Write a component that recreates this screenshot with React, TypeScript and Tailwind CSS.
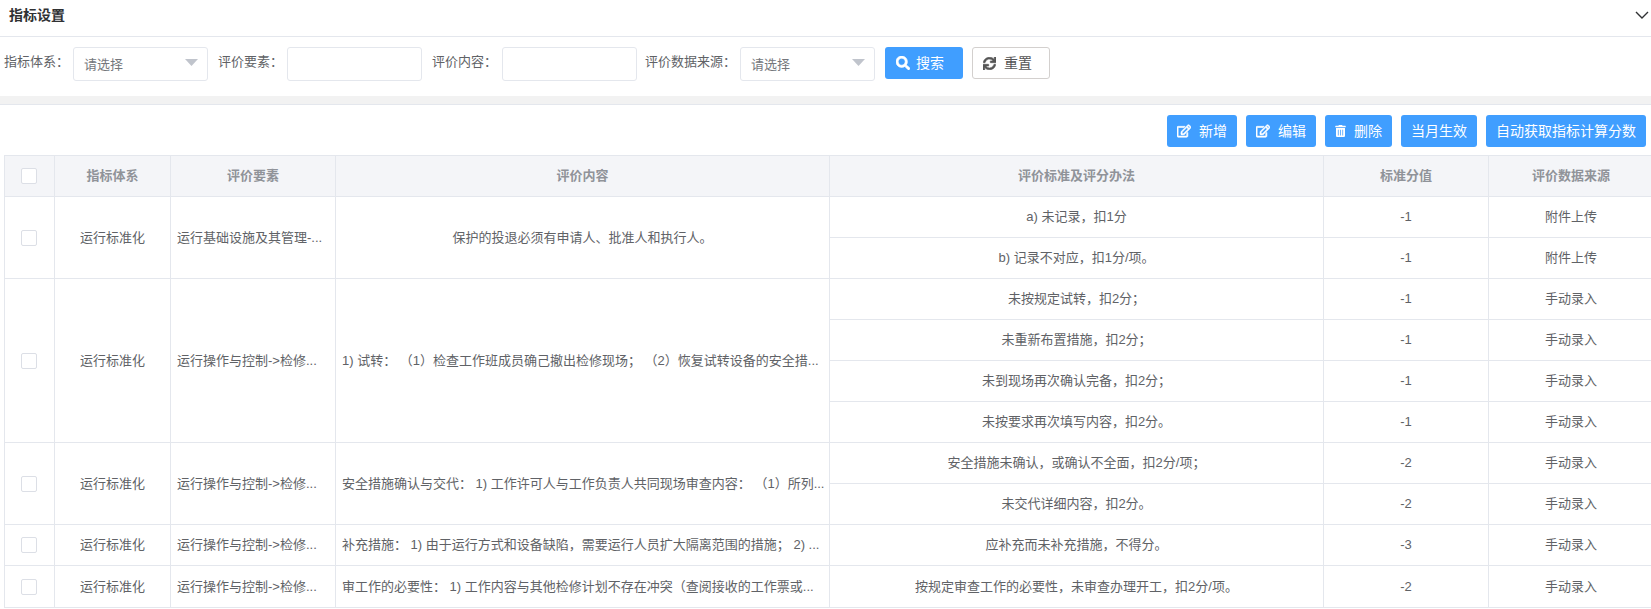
import React from 'react';
import { FaRegEdit, FaSearch, FaSync, FaTrashAlt } from 'react-icons/fa';

const FONT = 'font-["Liberation_Sans","Noto_Sans_CJK_SC",sans-serif]';

interface Item {
  standard: string;
  score: number;
  source: string;
}

interface Group {
  element: string;
  content: string;
  center?: boolean;
  items: Item[];
}

const manual = (standard: string, score: number): Item => ({ standard, score, source: '手动录入' });

const groups: Group[] = [
  {
    element: '运行基础设施及其管理-...',
    content: '保护的投退必须有申请人、批准人和执行人。',
    center: true,
    items: [
      { standard: 'a) 未记录，扣1分', score: -1, source: '附件上传' },
      { standard: 'b) 记录不对应，扣1分/项。', score: -1, source: '附件上传' },
    ],
  },
  {
    element: '运行操作与控制->检修...',
    content: '1) 试转： （1）检查工作班成员确己撤出检修现场； （2）恢复试转设备的安全措...',
    items: [
      manual('未按规定试转，扣2分；', -1),
      manual('未重新布置措施，扣2分；', -1),
      manual('未到现场再次确认完备，扣2分；', -1),
      manual('未按要求再次填写内容，扣2分。', -1),
    ],
  },
  {
    element: '运行操作与控制->检修...',
    content: '安全措施确认与交代： 1) 工作许可人与工作负责人共同现场审查内容： （1）所列...',
    items: [manual('安全措施未确认，或确认不全面，扣2分/项；', -2), manual('未交代详细内容，扣2分。', -2)],
  },
  {
    element: '运行操作与控制->检修...',
    content: '补充措施： 1) 由于运行方式和设备缺陷，需要运行人员扩大隔离范围的措施； 2) ...',
    items: [manual('应补充而未补充措施，不得分。', -3)],
  },
  {
    element: '运行操作与控制->检修...',
    content: '审工作的必要性： 1) 工作内容与其他检修计划不存在冲突（查阅接收的工作票或...',
    items: [manual('按规定审查工作的必要性，未审查办理开工，扣2分/项。', -2)],
  },
];

const Checkbox = () => (
  <span className="mx-auto block h-4 w-4 rounded-[2px] border border-[#dcdfe6] bg-white" />
);

const SelectBox = () => (
  <div className="flex h-[34px] w-[135px] items-center justify-between rounded-[3px] border border-[#e4e7ed] bg-white pl-[10px] pr-[9px] pt-[2px] text-[13px] text-[#75777c]">
    <span>请选择</span>
    <svg width="13" height="7" viewBox="0 0 13 7" className="-mt-[5px]">
      <path d="M0 0h13L6.5 7z" fill="#c0c4cc" />
    </svg>
  </div>
);

const TextBox = () => <div className="h-[34px] w-[135px] rounded-[3px] border border-[#e4e7ed] bg-white" />;

const Label = ({ children }: { children: React.ReactNode }) => (
  <label className="flex h-[30px] items-center whitespace-nowrap text-[13px] text-[#606266]">{children}</label>
);

const ToolButton = ({ icon, children }: { icon?: React.ReactNode; children: React.ReactNode }) => (
  <button className="flex h-8 items-center gap-2 rounded-[3px] bg-[#409eff] px-[10px] text-sm text-white">
    {icon}
    <span>{children}</span>
  </button>
);

const headCell = 'border border-[#e4e7ed] bg-[#f4f5f8] text-center text-[13px] font-bold text-[#909399]';
const bodyCell = 'border border-[#e4e7ed] text-center text-[13px] text-[#606266]';

export default function App() {
  return (
    <div className={`${FONT} min-h-[609px] w-[1651px] overflow-hidden bg-white`}>
      <div className="flex h-[37px] items-center justify-between border-b border-[#e4e7ed] pb-[6px] pl-[9px] pr-[2px]">
        <h2 className="text-sm font-bold text-[#303133]">指标设置</h2>
        <svg width="14" height="8" viewBox="0 0 14 8" fill="none" stroke="#303133" strokeWidth="1.4">
          <path d="M1 1l6 6 6-6" />
        </svg>
      </div>

      <div className="flex h-[59px] items-start pl-1 pt-[10px]">
        <Label>指标体系：</Label>
        <div className="ml-1"><SelectBox /></div>
        <div className="ml-[10px]"><Label>评价要素：</Label></div>
        <div className="ml-1"><TextBox /></div>
        <div className="ml-[10px]"><Label>评价内容：</Label></div>
        <div className="ml-[5px]"><TextBox /></div>
        <div className="ml-[8px]"><Label>评价数据来源：</Label></div>
        <div className="ml-1"><SelectBox /></div>
        <button className="ml-[10px] flex h-8 w-[78px] items-center gap-[6px] rounded-[3px] bg-[#409eff] pl-[11px] text-sm text-white">
          <FaSearch className="h-[14px] w-[14px]" stroke="currentColor" strokeWidth={24} />
          <span>搜索</span>
        </button>
        <button className="ml-[9px] flex h-8 w-[78px] items-center gap-2 rounded-[3px] border border-[#d3d0ce] bg-white pl-[10px] text-sm text-[#555]">
          <FaSync className="h-[13px] w-[13px]" stroke="currentColor" strokeWidth={24} />
          <span>重置</span>
        </button>
      </div>

      <div className="h-[9px] border-b border-[#e4e7ed] bg-[#f2f2f2]" />

      <div className="flex justify-end gap-[9px] pb-2 pr-[5px] pt-[10px]">
        <ToolButton icon={<FaRegEdit className="h-[14px] w-[14px]" stroke="currentColor" strokeWidth={24} />}>新增</ToolButton>
        <ToolButton icon={<FaRegEdit className="h-[14px] w-[14px]" stroke="currentColor" strokeWidth={24} />}>编辑</ToolButton>
        <ToolButton icon={<FaTrashAlt className="h-3 w-[11px]" />}>删除</ToolButton>
        <ToolButton>当月生效</ToolButton>
        <ToolButton>自动获取指标计算分数</ToolButton>
      </div>

      <div className="pl-1">
        <table className="w-[1649px] table-fixed border-collapse">
          <thead>
            <tr className="h-[41px]">
              <th className={`${headCell} w-[50px] pr-[2px]`}><Checkbox /></th>
              <th className={`${headCell} w-[116px]`}>指标体系</th>
              <th className={`${headCell} w-[165px]`}>评价要素</th>
              <th className={`${headCell} w-[494px]`}>评价内容</th>
              <th className={`${headCell} w-[494px]`}>评价标准及评分办法</th>
              <th className={`${headCell} w-[165px]`}>标准分值</th>
              <th className={`${headCell} w-[165px]`}>评价数据来源</th>
            </tr>
          </thead>
          <tbody>
            {groups.map((group, g) =>
              group.items.map((item, i) => (
                <tr key={`${g}-${i}`} className={g === groups.length - 1 ? 'h-[42px]' : 'h-[41px]'}>
                  {i === 0 && (
                    <>
                      <td rowSpan={group.items.length} className={`${bodyCell} pr-[2px]`}><Checkbox /></td>
                      <td rowSpan={group.items.length} className={bodyCell}>运行标准化</td>
                      <td rowSpan={group.items.length} className={`${bodyCell} px-[6px]`}>
                        <div className="whitespace-nowrap text-left">{group.element}</div>
                      </td>
                      <td rowSpan={group.items.length} className={`${bodyCell} px-[6px]`}>
                        <div className={group.center ? 'whitespace-nowrap text-center' : 'whitespace-nowrap text-left'}>
                          {group.content}
                        </div>
                      </td>
                    </>
                  )}
                  <td className={bodyCell}>{item.standard}</td>
                  <td className={bodyCell}>{item.score}</td>
                  <td className={bodyCell}>{item.source}</td>
                </tr>
              )),
            )}
          </tbody>
        </table>
      </div>
    </div>
  );
}
